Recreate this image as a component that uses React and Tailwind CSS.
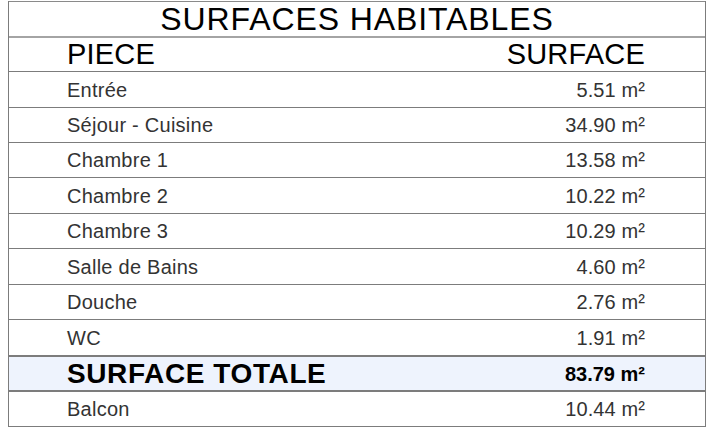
const rooms = [
  { name: "Entrée", area: "5.51 m²", h: "h-[36px]" },
  { name: "Séjour - Cuisine", area: "34.90 m²", h: "h-[35px]" },
  { name: "Chambre 1", area: "13.58 m²", h: "h-[35px]" },
  { name: "Chambre 2", area: "10.22 m²", h: "h-[36px]" },
  { name: "Chambre 3", area: "10.29 m²", h: "h-[35px]" },
  { name: "Salle de Bains", area: "4.60 m²", h: "h-[36px]" },
  { name: "Douche", area: "2.76 m²", h: "h-[35px]" },
  { name: "WC", area: "1.91 m²", h: "h-[36px]" },
];

function Row({ className, children }) {
  return (
    <div
      className={`flex items-center justify-between pl-[58px] pr-[60px] border-t border-[#7c7c7c] ${className}`}
    >
      {children}
    </div>
  );
}

export default function App() {
  return (
    <div className="w-[719px] h-[447px] bg-white pt-px pl-2 font-['Liberation_Sans',Arial,sans-serif]">
      <div className="w-[698px] border-x border-[#7c7c7c]">
        <div className="h-[35px] border-t border-[#8a8a8a] flex items-center justify-center text-[32px] text-black tracking-[0.9px] leading-none">
          SURFACES HABITABLES
        </div>

        <Row className="h-[35px] border-t-2 border-[#a4a4a4] text-[29px] text-black leading-none">
          <span className="tracking-[0.2px]">PIECE</span>
          <span className="tracking-[0.2px]">SURFACE</span>
        </Row>

        {rooms.map((r) => (
          <Row
            key={r.name}
            className={`${r.h} text-[20px] text-[#333333] leading-none`}
          >
            <span className="tracking-[0.25px]">{r.name}</span>
            <span className="tracking-[0.1px]">{r.area}</span>
          </Row>
        ))}

        <Row className="h-[35px] border-t-2 border-[#6e6e6e] bg-[#eef3fd] text-black leading-none">
          <span className="text-[28px] font-bold tracking-[0.6px]">
            SURFACE TOTALE
          </span>
          <span className="text-[20px] font-bold">83.79 m²</span>
        </Row>

        <Row className="h-[37px] border-t-2 border-b border-[#6e6e6e] text-[20px] text-[#333333] leading-none">
          <span className="tracking-[0.25px]">Balcon</span>
          <span className="tracking-[0.1px]">10.44 m²</span>
        </Row>
      </div>
    </div>
  );
}
